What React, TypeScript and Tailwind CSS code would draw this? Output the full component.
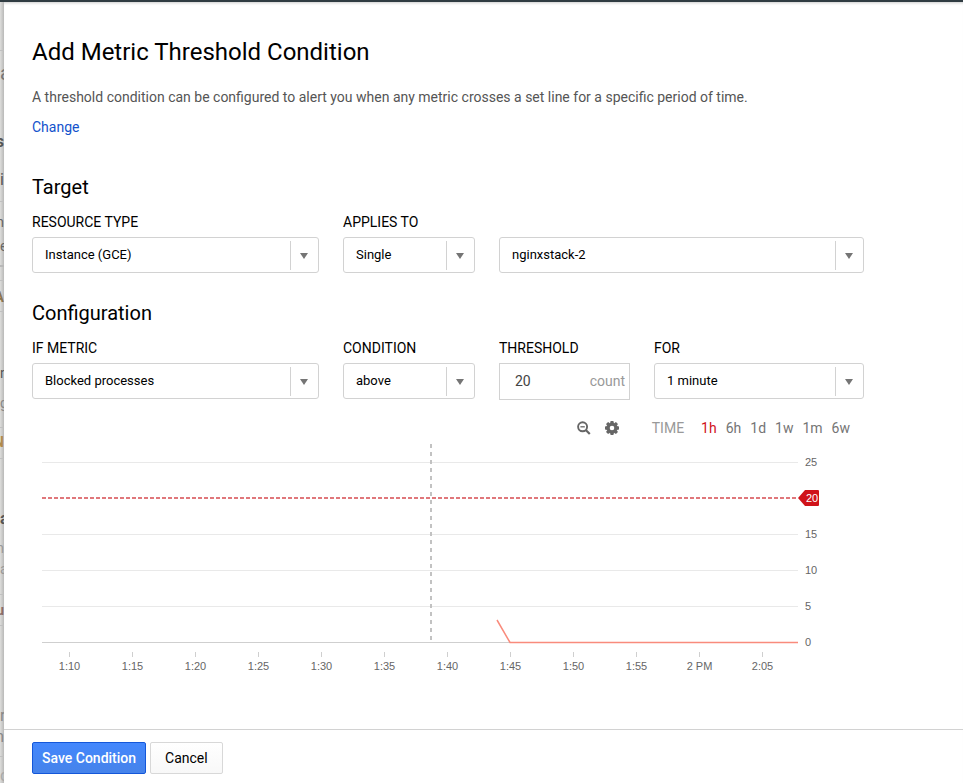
import { useState } from "react";
import type { ReactNode } from "react";

const backdropRows = [
  { text: "", box: "mt-12 h-px bg-[#c0c0c0]" },
  { text: "a", box: "mt-3 h-5 justify-start text-xl text-[#777]" },
  { text: "s", box: "mt-[49px] h-5 justify-end text-base font-bold text-[#555]" },
  { text: "i", box: "mt-[18px] h-5 justify-center text-base text-[#555]" },
  { text: "", box: "mt-[11px] h-px bg-[#c0c0c0]" },
  { text: "n", box: "mt-[10px] h-5 justify-end text-sm text-[#666]" },
  { text: "e", box: "mt-1 h-5 justify-start text-sm text-[#666]" },
  { text: "", box: "mt-[9px] h-[2px] bg-[#b8b8b8]" },
  { text: "", box: "mt-[13px] h-px bg-[#c0c0c0]" },
  { text: "A", box: "mt-[6px] h-5 justify-end text-sm font-bold text-[#8a7450]" },
  { text: "", box: "mt-1 h-px bg-[#c0c0c0]" },
  { text: "n", box: "mt-[51px] h-5 justify-start text-sm text-[#555]" },
  { text: "g", box: "mt-[10px] h-5 justify-start text-sm text-[#888]" },
  { text: "", box: "mt-[14px] h-px bg-[#c0c0c0]" },
  { text: "N", box: "mt-1 h-5 justify-end text-sm font-bold text-[#b08a4a]" },
  { text: "", box: "mt-[6px] h-px bg-[#c0c0c0]" },
  { text: "a", box: "mt-[50px] h-5 justify-start text-base font-bold text-[#555]" },
  { text: "n", box: "mt-[9px] h-5 justify-end text-sm text-[#999]" },
  { text: "a", box: "mt-px h-5 justify-start text-sm text-[#999]" },
  { text: "", box: "mt-[15px] h-px bg-[#c0c0c0]" },
  { text: "u", box: "mt-[5px] h-5 justify-end text-sm font-bold text-[#8b6b68]" },
  { text: "", box: "mt-[5px] h-px bg-[#c0c0c0]" },
  { text: "r", box: "mt-20 h-5 justify-start text-base text-[#888]" },
  { text: "n", box: "mt-px h-5 justify-end text-base text-[#888]" },
  { text: "", box: "mt-[9px] h-px bg-[#c0c0c0]" },
  { text: "c", box: "mt-[11px] h-[15px] justify-start text-base text-[#aaa]" },
];

type SelectProps = { id: string; label: string; hiddenLabel?: boolean; value: string; className?: string };

function FieldLabel({ htmlFor, children }: { htmlFor: string; children: ReactNode }) {
  return (
    <label htmlFor={htmlFor} className="block h-5 text-[14px] leading-5 text-black">
      {children}
    </label>
  );
}

function SelectField({ id, label, hiddenLabel = false, value, className = "" }: SelectProps) {
  return (
    <div className={`flex min-w-0 flex-col gap-[5px] ${className}`}>
      {hiddenLabel ? <div className="h-5" /> : <FieldLabel htmlFor={id}>{label}</FieldLabel>}
      <div className="relative">
        <select
          id={id}
          aria-label={hiddenLabel ? label : undefined}
          className="block h-9 w-full appearance-none rounded-[3px] border border-[#d2d2d2] bg-white pr-8 pb-[1px] pl-3 text-[13px] text-black"
        >
          <option>{value}</option>
        </select>
        <span className="pointer-events-none absolute top-1 right-0 bottom-[3px] flex w-[29px] items-center justify-center border-l border-[#d2d2d2] pr-[3px]">
          <svg width="8" height="6" viewBox="0 0 8 6" aria-hidden="true">
            <path d="M0 0h8L4 6z" fill="#757575" />
          </svg>
        </span>
      </div>
    </div>
  );
}

function ZoomOutIcon() {
  return (
    <svg width="14" height="14" viewBox="0 0 14 14" fill="none" stroke="#666" aria-hidden="true">
      <circle cx="5.6" cy="5.8" r="4.5" strokeWidth="1.9" />
      <path d="M3.4 5.8h4.4" strokeWidth="1.3" />
      <path d="M8.8 9l4 4" strokeWidth="2.2" />
    </svg>
  );
}

function GearIcon() {
  return (
    <svg width="14" height="14" viewBox="-7 -7 14 14" aria-hidden="true">
      <circle r="3.9" fill="none" stroke="#666" strokeWidth="3.2" />
      {[0, 45, 90, 135].map((angle) => (
        <path
          key={angle}
          transform={`rotate(${angle})`}
          d="M-1.9-4.8L-1.4-7h2.8l.5 2.2zM-1.9 4.8L-1.4 7h2.8l.5-2.2z"
          fill="#666"
        />
      ))}
    </svg>
  );
}

const ranges = ["1h", "6h", "1d", "1w", "1m", "6w"];
const ticks = ["1:10", "1:15", "1:20", "1:25", "1:30", "1:35", "1:40", "1:45", "1:50", "1:55", "2 PM", "2:05"];
const levels = [25, 15, 10, 5, 0];

function Chart() {
  const yOf = (v: number) => 202.5 - v * 7.2;
  return (
    <svg
      viewBox="0 0 832 240"
      className="block w-full font-['Liberation_Sans',Arial,sans-serif] text-[11px]"
      role="img"
      aria-label="Blocked processes over the last hour"
    >
      {levels.map((v) => (
        <g key={v}>
          <path d={`M10 ${yOf(v)}H766`} stroke={v === 0 ? "#cfcfcf" : "#e9e9e9"} />
          <text x="773" y={yOf(v) + 3.5} fill="#666">
            {v}
          </text>
        </g>
      ))}
      <path d="M399 4V202" stroke="#c2c2c2" strokeWidth="2" strokeDasharray="4 4" />
      <path d="M10 58H766" stroke="#e0777b" strokeWidth="2" strokeDasharray="4 2" />
      <path d="M766 58l7-8h13q1 0 1 1v14q0 1-1 1h-13z" fill="#d0131a" />
      <text x="774" y="62" fill="#fff">
        20
      </text>
      <path d="M465 180L478 202.5H766" fill="none" stroke="#f98b7c" strokeWidth="1.5" />
      {ticks.map((t, i) => (
        <g key={t}>
          <path d={`M${37.5 + i * 63} 212v5`} stroke="#cfcfcf" />
          <text x={37.5 + i * 63} y="230" textAnchor="middle" fill="#666">
            {t}
          </text>
        </g>
      ))}
    </svg>
  );
}

export default function App() {
  const [range, setRange] = useState("1h");
  const [threshold, setThreshold] = useState("20");

  return (
    <div className="flex min-h-screen border-t-2 border-[#303c42] bg-white font-[Roboto,sans-serif]">
      <div aria-hidden="true" className="w-1 shrink-0 overflow-hidden bg-linear-to-r from-[#dededc] to-[#b9b9b8]">
        {backdropRows.map((row, i) => (
          <div key={i} className={`flex w-1 items-center leading-5 ${row.box}`}>
            {row.text}
          </div>
        ))}
      </div>

      <main className="flex min-w-0 flex-1 flex-col bg-white shadow-[inset_0_3px_3px_-2px_rgba(0,0,0,0.2)]">
        <div className="px-7 pt-8">
          <h1 className="text-[24px] leading-9 text-black">Add Metric Threshold Condition</h1>
          <p className="mt-[17px] text-[14px] leading-5 text-[#555]">
            A threshold condition can be configured to alert you when any metric crosses a set line for a specific
            period of time.
          </p>
          <a href="#change" className="mt-[10px] inline-block text-[14px] leading-5 text-[#1352cc]">
            Change
          </a>

          <section className="mt-[34px] max-w-[832px]">
            <h2 className="text-[20px] leading-7 text-black">Target</h2>
            <div className="mt-[11px] grid grid-cols-[287fr_132fr_131fr_210fr] gap-x-6">
              <SelectField id="resource" label="RESOURCE TYPE" value="Instance (GCE)" />
              <SelectField id="applies" label="APPLIES TO" value="Single" />
              <SelectField id="instance" label="Instance" hiddenLabel value="nginxstack-2" className="col-span-2" />
            </div>
          </section>

          <section className="mt-[26px] max-w-[832px]">
            <h2 className="text-[20px] leading-7 text-black">Configuration</h2>
            <div className="mt-[11px] grid grid-cols-[287fr_132fr_131fr_210fr] gap-x-6">
              <SelectField id="metric" label="IF METRIC" value="Blocked processes" />
              <SelectField id="condition" label="CONDITION" value="above" />
              <div className="flex min-w-0 flex-col gap-[5px]">
                <FieldLabel htmlFor="threshold">THRESHOLD</FieldLabel>
                <div className="flex h-[37px] items-center border border-[#d2d2d2] pr-1 pl-[15px] text-[14px]">
                  <input
                    id="threshold"
                    value={threshold}
                    onChange={(e) => setThreshold(e.target.value)}
                    className="w-0 min-w-0 flex-1 text-[#444] outline-none"
                  />
                  <span className="text-[#999]">count</span>
                </div>
              </div>
              <SelectField id="duration" label="FOR" value="1 minute" />
            </div>

            <div className="mt-[18px] mb-[2px] flex h-5 items-center justify-end pr-[14px] text-[14px] leading-5">
              <button aria-label="Zoom out" className="mr-[14px]">
                <ZoomOutIcon />
              </button>
              <button aria-label="Chart settings" className="mr-[33px]">
                <GearIcon />
              </button>
              <span className="mr-[17px] text-[#999]">TIME</span>
              <div className="flex gap-[9px]">
                {ranges.map((r) => (
                  <button
                    key={r}
                    onClick={() => setRange(r)}
                    className={r === range ? "text-[#d0131a]" : "text-[#757575]"}
                  >
                    {r}
                  </button>
                ))}
              </div>
            </div>
            <Chart />
          </section>
        </div>

        <footer className="mt-auto flex gap-1 border-t border-[#d2d2d2] px-7 pt-3 pb-[9px]">
          <button className="h-8 rounded-[2px] border border-[#1457d9] bg-linear-to-b from-[#4387fd] to-[#4683ea] px-[9px] text-[14px] font-medium text-white">
            Save Condition
          </button>
          <button className="h-8 rounded-[2px] border border-[#d8d8d8] bg-linear-to-b from-white to-[#f8f8f8] px-[14px] text-[14px] text-black">
            Cancel
          </button>
        </footer>
      </main>
    </div>
  );
}
